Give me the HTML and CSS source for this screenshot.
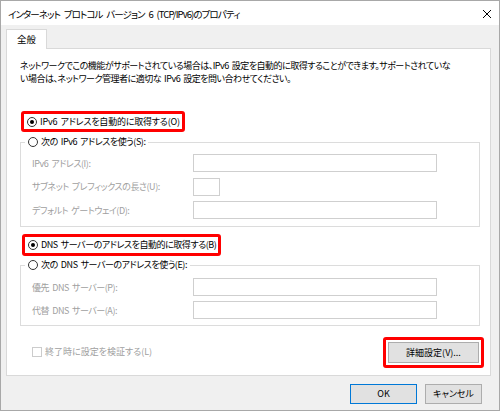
FILE: index.html
```html
<!DOCTYPE html>
<html lang="ja">
<head>
<meta charset="utf-8">
<link rel="stylesheet" href="styles.css">
</head>
<body>
<div class="window">
  <div class="titlebar">
    <span class="title">インターネット プロトコル バージョン 6 (TCP/IPv6)のプロパティ</span>
    <svg class="close" width="10" height="10" viewBox="0 0 10 10"><path d="M1 1L9 9M9 1L1 9" stroke="#000" stroke-width="1" fill="none"/></svg>
  </div>
  <div class="body">
    <div class="tabs"><div class="tab">全般</div></div>
    <div class="panel">
      <p class="desc">ネットワークでこの機能がサポートされている場合は、IPv6 設定を自動的に取得することができます。サポートされていな<br>い場合は、ネットワーク管理者に適切な IPv6 設定を問い合わせてください。</p>

      <div class="hl hl-1"><span class="opt o1"><span class="radio on"></span>IPv6 アドレスを自動的に取得する(O)</span></div>
      <fieldset class="group g1">
        <legend class="opt"><span class="radio"></span>次の IPv6 アドレスを使う(S):</legend>
        <div class="rows r1">
          <span class="lbl">IPv6 アドレス(I):</span><span class="field wide"></span>
          <span class="lbl">サブネット プレフィックスの長さ(U):</span><span class="field short"></span>
          <span class="lbl">デフォルト ゲートウェイ(D):</span><span class="field wide"></span>
        </div>
      </fieldset>

      <div class="hl hl-2"><span class="opt"><span class="radio on"></span>DNS サーバーのアドレスを自動的に取得する(B)</span></div>
      <fieldset class="group g2">
        <legend class="opt"><span class="radio"></span>次の DNS サーバーのアドレスを使う(E):</legend>
        <div class="rows r2">
          <span class="lbl">優先 DNS サーバー(P):</span><span class="field wide"></span>
          <span class="lbl">代替 DNS サーバー(A):</span><span class="field wide"></span>
        </div>
      </fieldset>

      <div class="bottom">
        <span class="check"><span class="box"></span>終了時に設定を検証する(L)</span>
        <div class="hl hl-btn"><button class="btn adv">詳細設定(V)...</button></div>
      </div>
    </div>
    <div class="footer">
      <button class="btn ok">OK</button>
      <button class="btn cancel">キャンセル</button>
    </div>
  </div>
</div>
</body>
</html>
```
FILE: styles.css
```css
* { box-sizing: border-box; }
html, body { margin: 0; padding: 0; background: #fff; }
body {
  font-family: "Noto Sans CJK JP", "Noto Sans", sans-serif;
  font-size: 9px;
  letter-spacing: -0.45px;
  word-spacing: 1.5px;
  color: #000;
  font-feature-settings: "palt";
}
.window {
  width: 500px;
  height: 411px;
  border: 1px solid #a8a8a8;
  display: flex;
  flex-direction: column;
  background: #f0f0f0;
}
.titlebar {
  height: 24px;
  background: #fff;
  display: flex;
  align-items: center;
  justify-content: space-between;
  padding: 2px 7px 0 7px;
  flex: none;
}
.title { font-size: 9.5px; letter-spacing: -0.9px; word-spacing: 2.5px; white-space: nowrap; }
.close { display: block; }
.body {
  flex: 1;
  padding: 4px 8px 0 5px;
}
.tabs { display: flex; }
.tab {
  width: 41px;
  height: 20px;
  background: #fff;
  border: 1px solid #d9d9d9;
  border-bottom: none;
  margin-bottom: -1px;
  position: relative;
  z-index: 1;
  text-align: center;
  line-height: 18px;
  font-size: 9.5px;
  letter-spacing: 0;
}
.panel {
  background: #fff;
  border: 1px solid #d9d9d9;
  height: 328px;
  padding: 10px 6px 0 13px;
}
.desc {
  margin: 0;
  line-height: 13px;
  white-space: nowrap;
  letter-spacing: -0.5px;
}
.hl {
  border: 3px solid #f00;
  border-radius: 3px;
  display: flex;
  align-items: center;
}
.hl-1 { margin: 26px 0 0 1px; width: 164px; height: 21px; padding-left: 3px; }
.hl-2 { margin: 7px 0 0 2px; width: 199px; height: 22px; padding-left: 3px; }
.opt {
  display: flex;
  align-items: center;
  line-height: 14px;
  white-space: nowrap;
}
.o1 { letter-spacing: -0.2px; }
.radio {
  width: 10px;
  height: 10px;
  border: 1px solid #333;
  border-radius: 50%;
  margin-right: 3px;
  display: flex;
  align-items: center;
  justify-content: center;
  flex: none;
  background: #fff;
}
.radio.on::after {
  content: "";
  width: 4px;
  height: 4px;
  border-radius: 50%;
  background: #000;
}
.group {
  margin: 0 4px 0 0;
  border: 1px solid #dcdcdc;
  padding: 0 0 7px 4px;
}
.g1 { margin-top: 3px; }
.g2 { margin-top: 2px; padding-bottom: 6px; }
.group legend { padding: 0 3px; }
.rows {
  display: grid;
  grid-template-columns: 161px auto;
  justify-items: start;
  align-items: center;
  margin-left: 7px;
}
.r1 { margin-top: 5px; row-gap: 5.5px; }
.r2 { margin-top: 6px; row-gap: 5px; }
.lbl { color: #a0a0a0; white-space: nowrap; }
.field {
  display: block;
  height: 18px;
  border: 1px solid #cfcfcf;
  background: #fff;
}
.field.wide { width: 244px; }
.field.short { width: 27px; }
.bottom {
  margin-top: 11px;
  display: flex;
  align-items: center;
  justify-content: space-between;
}
.check {
  display: flex;
  align-items: center;
  color: #a0a0a0;
  margin-left: 12px;
  margin-top: -2px;
  white-space: nowrap;
  letter-spacing: 0;
}
.box {
  width: 10px;
  height: 10px;
  border: 1px solid #cccccc;
  margin-right: 3px;
  background: #fff;
}
.hl-btn { padding: 2px; width: 101px; height: 31px; }
.btn {
  font-family: inherit;
  font-size: 9px;
  letter-spacing: 0;
  font-feature-settings: "palt";
  background: #e1e1e1;
  border: 1px solid #adadad;
  color: #000;
  padding: 0;
  margin: 0;
  height: 20px;
  line-height: 18px;
}
.adv { width: 91px; height: 21px; }
.footer {
  display: flex;
  justify-content: flex-end;
  gap: 8px;
  margin: 8px 9px 0 0;
}
.ok { width: 67px; border-color: #0078d7; }
.cancel { width: 57px; }
```
